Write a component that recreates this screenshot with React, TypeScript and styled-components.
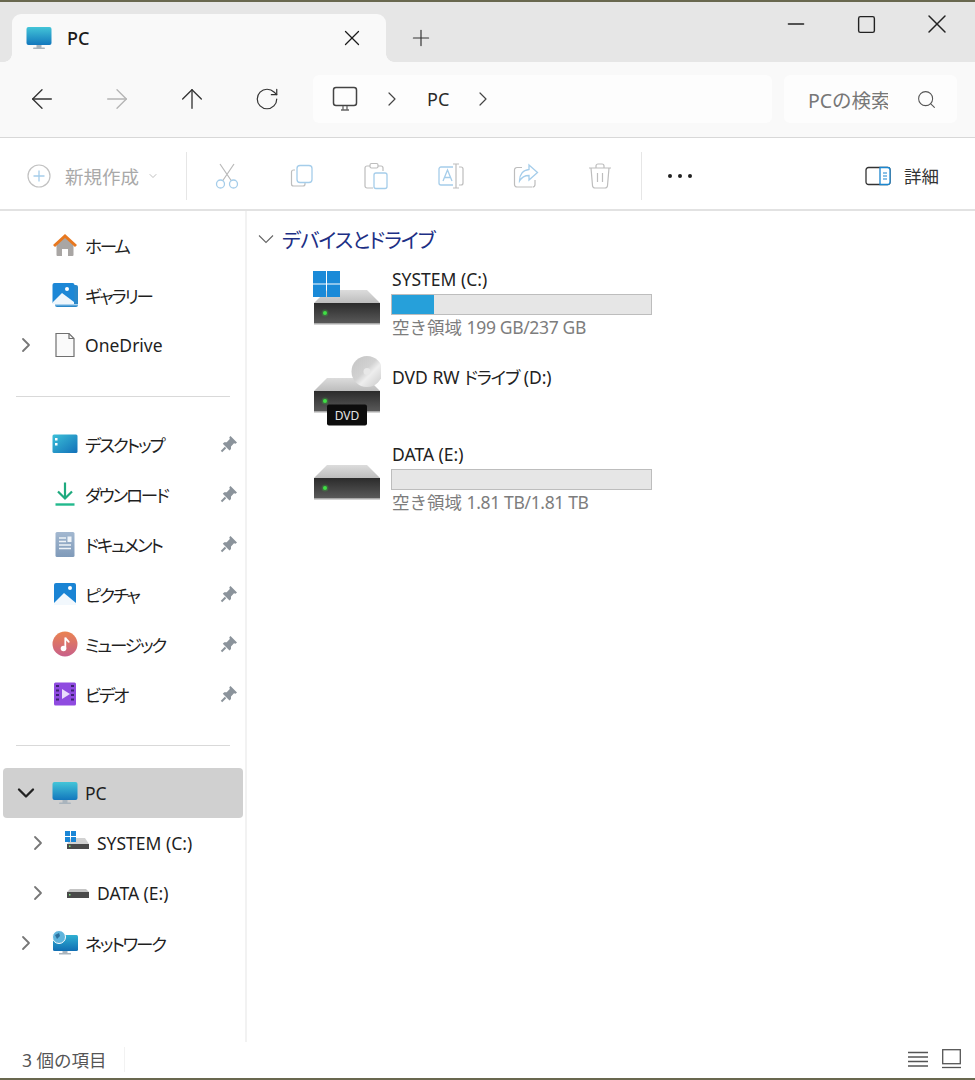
import React from "react";
import styled, { createGlobalStyle } from "styled-components";
import { ArrowLeft, ArrowRight, ArrowUp, ChevronDown, ChevronRight, Minus, Plus, RotateCw, Search, Square, X } from "lucide-react";

const GlobalStyle = createGlobalStyle`
  html, body { margin: 0; padding: 0; background: #fff; }
  * { box-sizing: border-box; }
  body {
    font-family: "Noto Sans", "Noto Sans CJK JP", sans-serif;
    color: #1b1b1b;
  }
`;

const Window = styled.div`
  width: 975px;
  height: 1080px;
  display: flex;
  flex-direction: column;
  overflow: hidden;
  border-top: 2px solid #69684f;
  border-bottom: 2px solid #69684f;
  background: #fff;
`;

const TitleBar = styled.div`
  height: 60px;
  flex: none;
  display: flex;
  background: #e6e6e6;
  padding-left: 12px;
`;

const Tab = styled.div`
  position: relative;
  width: 374px;
  height: 48px;
  margin-top: 12px;
  display: flex;
  align-items: center;
  padding: 0 21px 0 14px;
  background: #f9f9f9;
  border-radius: 9px 9px 0 0;
  font-size: 18px;
  font-weight: 500;
  &::before, &::after {
    content: "";
    position: absolute;
    bottom: 0;
    width: 8px;
    height: 8px;
  }
  &::before { left: -8px; background: radial-gradient(circle at 0 0, #e6e6e6 7.5px, #f9f9f9 8px); }
  &::after { right: -8px; background: radial-gradient(circle at 100% 0, #e6e6e6 7.5px, #f9f9f9 8px); }
`;

const TabTitle = styled.span`
  margin-left: 15px;
  flex: 1;
`;

const NewTab = styled.div`
  width: 70px;
  height: 48px;
  margin-top: 12px;
  display: flex;
  align-items: center;
  justify-content: center;
  color: #333;
`;

const WindowControls = styled.div`
  margin-left: auto;
  display: flex;
  padding-right: 2.5px;
`;

const WindowButton = styled.div`
  width: 70.5px;
  height: 44px;
  display: flex;
  align-items: center;
  justify-content: center;
  color: #222;
`;

const AddressRow = styled.div`
  height: 76px;
  flex: none;
  display: flex;
  align-items: center;
  padding: 0 18px 1px 4px;
  background: #f9f9f9;
  border-bottom: 1px solid #d8d8d8;
`;

const NavButton = styled.div<{ $muted?: boolean }>`
  width: 75px;
  height: 48px;
  display: flex;
  align-items: center;
  justify-content: center;
  color: ${(p) => (p.$muted ? "#b4b4b4" : "#333")};
`;

const Breadcrumb = styled.div`
  width: 459px;
  height: 48px;
  margin-left: 9px;
  display: flex;
  align-items: center;
  padding-left: 19px;
  background: #fdfdfd;
  border-radius: 6px;
  font-size: 18px;
  color: #2a2a2a;
`;

const CrumbChevron = styled.span`
  display: flex;
  width: 24px;
  justify-content: center;
  margin: 0 23px 0 22px;
  color: #444;
`;

const SearchBox = styled.div`
  width: 173px;
  height: 48px;
  margin-left: 12px;
  display: flex;
  align-items: center;
  padding-left: 24px;
  background: #fdfdfd;
  border-radius: 6px;
  color: #777;
  font-size: 19.5px;
`;

const SearchText = styled.span`
  width: 80px;
  flex: none;
  overflow: hidden;
  white-space: nowrap;
`;

const SearchIcon = styled.span`
  display: flex;
  margin-left: 28px;
  color: #555;
`;

const Toolbar = styled.div`
  height: 73px;
  flex: none;
  display: flex;
  align-items: center;
  padding-top: 4px;
  border-bottom: 2px solid #e2e2e2;
`;

const NewButton = styled.div`
  width: 186px;
  display: flex;
  align-items: center;
  padding-left: 27px;
  font-size: 18.5px;
  color: #a9a9a9;
`;

const NewLabel = styled.span`
  margin: 0 8px 0 14px;
`;

const Separator = styled.div`
  width: 1px;
  height: 48px;
  background: #e6e6e6;
`;

const ToolGroup = styled.div`
  display: flex;
  margin: 0 3px;
`;

const ToolButton = styled.div`
  width: 74.6px;
  display: flex;
  justify-content: center;
`;

const MoreButton = styled.div`
  width: 72px;
  margin-left: 2px;
  display: flex;
  justify-content: center;
`;

const Details = styled.div`
  margin-left: auto;
  padding-right: 36px;
  display: flex;
  align-items: center;
  gap: 13px;
  font-size: 17.5px;
  color: #333;
`;

const Body = styled.div`
  flex: 1;
  min-height: 0;
  display: flex;
`;

const Sidebar = styled.nav`
  width: 247px;
  flex: none;
  padding: 9px 3px 0;
  border-right: 2px solid #f2f2f2;
`;

const NavRow = styled.div<{ $active?: boolean; $indent?: boolean }>`
  width: 240px;
  height: 50px;
  display: flex;
  align-items: center;
  padding-left: ${(p) => (p.$indent ? "19px" : "7px")};
  padding-right: 4px;
  border-radius: 4px;
  background: ${(p) => (p.$active ? "#d0d0d0" : "transparent")};
  font-size: 17.5px;
  color: #1f1f1f;
`;

const Caret = styled.span<{ $strong?: boolean }>`
  width: 32px;
  flex: none;
  display: flex;
  justify-content: center;
  color: ${(p) => (p.$strong ? "#222" : "#777")};
`;

const RowIcon = styled.span`
  width: 32px;
  flex: none;
  margin-left: 7px;
  display: flex;
  justify-content: center;
`;

const RowLabel = styled.span`
  margin-left: 4px;
  white-space: nowrap;
`;

const Kana = styled.span<{ $tight?: number }>`
  font-feature-settings: "palt";
  letter-spacing: ${(p) => p.$tight ?? -2.1}px;
`;

const PinSlot = styled.span`
  width: 20px;
  margin-left: auto;
  display: flex;
  justify-content: center;
`;

const Divider = styled.hr`
  width: 214px;
  height: 1px;
  margin: 26px 0 22px 13px;
  border: 0;
  background: #d9d9d9;
`;

const Main = styled.main`
  flex: 1;
  padding: 16px 0 0 11px;
`;

const SectionHeader = styled.div`
  height: 24px;
  display: flex;
  align-items: center;
  gap: 8px;
  margin-bottom: 15px;
  font-size: 20.5px;
  color: #1d2f85;
  white-space: nowrap;
`;

const DriveList = styled.div`
  padding-left: 55px;
`;

const DriveTile = styled.div`
  height: 87.5px;
  display: flex;
`;

const DriveIcon = styled.span`
  width: 68px;
  flex: none;
  display: block;
`;

const DriveInfo = styled.div<{ $lone?: boolean }>`
  width: 261px;
  margin-left: 10px;
  padding-top: ${(p) => (p.$lone ? "10px" : "0")};
`;

const DriveName = styled.div`
  height: 26px;
  line-height: 26px;
  padding-left: 1px;
  font-size: 17.5px;
  color: #222;
  white-space: nowrap;
`;

const Meter = styled.div`
  height: 21px;
  margin-top: 2px;
  border: 1px solid #bdbdbd;
  background: #e6e6e6;
`;

const MeterFill = styled.div`
  height: 100%;
  background: #26a0da;
`;

const DriveFree = styled.div`
  height: 24px;
  line-height: 24px;
  padding-left: 1px;
  font-size: 17.5px;
  color: #7d7d7d;
  white-space: nowrap;
`;

const FreeAmount = styled.span`
  letter-spacing: -0.35px;
`;

const StatusBar = styled.footer`
  height: 36px;
  flex: none;
  display: flex;
  align-items: center;
  padding: 0 14px 2px 22px;
  font-size: 17.5px;
  color: #555;
`;

const StatusCount = styled.span`
  padding-right: 17px;
  border-right: 1px solid #f2f2f2;
`;

const StatusIcons = styled.div`
  margin-left: auto;
  display: flex;
  align-items: center;
  gap: 14px;
`;

const Glyph = styled.svg`
  display: block;
  flex: none;
`;

const MonitorIcon = ({ id, size = 26 }: { id: string; size?: number }) => (
  <Glyph width={size} height={size} viewBox="0 0 26 26">
    <defs>
      <linearGradient id={id} x1="0" y1="0" x2="0" y2="1">
        <stop offset="0" stopColor="#43c5d8" />
        <stop offset="1" stopColor="#1277bd" />
      </linearGradient>
    </defs>
    <rect x="10.5" y="19" width="5" height="4" fill="#a9b4bd" />
    <rect x="7" y="22.5" width="12" height="1.6" rx=".8" fill="#a9b4bd" />
    <rect x="0.5" y="2" width="25" height="18" rx="2" fill={`url(#${id})`} />
  </Glyph>
);

const HomeIcon = () => (
  <Glyph width={26} height={26} viewBox="0 0 26 26">
    <path d="M4.5 12 13 4.5 21.5 12V23a1 1 0 0 1-1 1H16v-7h-6v7H5.500a1 1 0 0 1-1-1Z" fill="#a9a6a4" />
    <path d="M1 13 13 2 25 13 23 15 13 6 3 15Z" fill="#e8781f" />
  </Glyph>
);

const GalleryIcon = () => (
  <Glyph width={26} height={26} viewBox="0 0 26 26">
    <rect x="3" y="3" width="23" height="22" rx="2" fill="#2a88c9" />
    <rect x="0.500" y="1" width="22" height="21" rx="2" fill="#1c87d6" />
    <path d="M1 20 10 11 22 20V22H1Z" fill="#eef6fc" />
    <circle cx="15" cy="7" r="2" fill="#fff" />
    <rect x="3" y="22" width="23" height="1.400" fill="#a9d2ef" />
  </Glyph>
);

const FileIcon = () => (
  <Glyph width={26} height={26} viewBox="0 0 26 26">
    <path d="M4 1.500H17L22 6.500V24.500H4Z" fill="#fafafa" stroke="#707070" strokeWidth="1.200" />
    <path d="M17 1.500V6.500H22" fill="none" stroke="#707070" strokeWidth="1.200" />
  </Glyph>
);

const DesktopIcon = () => (
  <Glyph width={26} height={26} viewBox="0 0 26 26">
    <defs>
      <linearGradient id="desk" x1="0" y1="0" x2="1" y2="1">
        <stop offset="0" stopColor="#3cc0d8" />
        <stop offset="1" stopColor="#1270b8" />
      </linearGradient>
    </defs>
    <rect x="0.500" y="3.500" width="25" height="18.500" rx="1.500" fill="url(#desk)" />
    <rect x="3" y="7" width="2.500" height="2.500" fill="#fff" />
    <rect x="3" y="12" width="2.500" height="2.500" fill="#fff" />
  </Glyph>
);

const DownloadIcon = () => (
  <Glyph width={26} height={26} viewBox="0 0 26 26">
    <path d="M13 1.500V17M6 10.500 13 17.500 20 10.500" fill="none" stroke="#1eaa7e" strokeWidth="2.200" />
    <path d="M3.500 23.500H22.500" stroke="#22b98d" strokeWidth="2.400" />
  </Glyph>
);

const DocumentIcon = () => (
  <Glyph width={26} height={26} viewBox="0 0 26 26">
    <defs>
      <linearGradient id="doc" x1="0" y1="0" x2="0" y2="1">
        <stop offset="0" stopColor="#a3b8d0" />
        <stop offset="1" stopColor="#7f9ab9" />
      </linearGradient>
    </defs>
    <rect x="3.500" y="1" width="19" height="25" rx="1.500" fill="url(#doc)" />
    <path d="M7 7H14M7 10.500H14M7 14H19M7 17.500H19" stroke="#eef3f8" strokeWidth="1.300" />
    <rect x="15.500" y="5.500" width="4" height="5.500" fill="#eef3f8" />
  </Glyph>
);

const PicturesIcon = () => (
  <Glyph width={26} height={26} viewBox="0 0 26 26">
    <rect x="2" y="2" width="22" height="22" rx="2" fill="#1a84d4" />
    <path d="M2 22 12 12 24 22V24H2Z" fill="#f2f8fd" />
    <circle cx="18" cy="7" r="2" fill="#fff" />
  </Glyph>
);

const MusicIcon = () => (
  <Glyph width={26} height={26} viewBox="0 0 26 26">
    <defs>
      <linearGradient id="music" x1="0" y1="0" x2="0" y2="1">
        <stop offset="0" stopColor="#ea8350" />
        <stop offset="1" stopColor="#c8608a" />
      </linearGradient>
    </defs>
    <circle cx="13" cy="13" r="12.500" fill="url(#music)" />
    <circle cx="11.500" cy="17.500" r="2.800" fill="#fff" />
    <path d="M13.300 17.500V6.500C14 9 16.500 9.500 17 11.500" fill="none" stroke="#fff" strokeWidth="1.800" />
  </Glyph>
);

const VideoIcon = () => (
  <Glyph width={26} height={26} viewBox="0 0 26 26">
    <rect x="2" y="1.500" width="22" height="23" rx="1.500" fill="#8f4be0" />
    <path d="M10 8 18 13 10 18Z" fill="#e9dcfb" />
    <path d="M4 5H7M4 9.500H7M4 14H7M4 18.500H7M19 5H22M19 9.500H22M19 14H22M19 18.500H22" stroke="#3e2275" strokeWidth="1.800" />
  </Glyph>
);

const SmallDrive = ({ withLogo }: { withLogo?: boolean }) => (
  <Glyph width={28} height={26} viewBox="0 0 28 26">
    {withLogo ? (
      <>
        <path d="M8 8H22L26 14H4Z" fill="#d2d2d2" />
        <rect x="4" y="14" width="22" height="5" fill="#4a4a4a" />
        <rect x="6" y="15.500" width="1.500" height="1.500" fill="#7fe27f" />
        <g fill="#1a86d6">
          <rect x="2" y="1" width="5" height="5" />
          <rect x="8" y="1" width="5" height="5" />
          <rect x="2" y="7" width="5" height="5" />
          <rect x="8" y="7" width="5" height="5" />
        </g>
      </>
    ) : (
      <>
        <path d="M7 9H23L26 12H4Z" fill="#c4c4c4" />
        <rect x="4" y="12" width="22" height="6" fill="#4a4a4a" />
        <rect x="6" y="14" width="1.500" height="1.500" fill="#7fe27f" />
      </>
    )}
  </Glyph>
);

const NetworkIcon = () => (
  <Glyph width={26} height={26} viewBox="0 0 26 26">
    <defs>
      <linearGradient id="netscreen" x1="0" y1="0" x2="0" y2="1">
        <stop offset="0" stopColor="#2fb0d2" />
        <stop offset="1" stopColor="#116eb3" />
      </linearGradient>
    </defs>
    <rect x="10.500" y="20" width="5" height="3.500" fill="#a9b4bd" />
    <rect x="7" y="23" width="12" height="1.500" fill="#a9b4bd" />
    <rect x="1" y="5" width="25" height="16" rx="1.500" fill="url(#netscreen)" />
    <circle cx="7" cy="7" r="6.500" fill="#5fb4dc" stroke="#fff" strokeWidth="1" />
    <path d="M3 5 7 3 8 6 5 9Z" fill="#2b6f9d" />
  </Glyph>
);

const PinIcon = () => (
  <Glyph width={18} height={18} viewBox="0 0 18 18">
    <path d="M10.500 1 17 7.500 15.500 8.800 14 8.300 11 11.500 11 14 9.500 15.500 2.800 8.800 4.300 7.200 6.700 7.200 9.800 4 9.300 2.300Z" fill="#8b939b" />
    <path d="M5.500 12.500 1.500 16.500" stroke="#8b939b" strokeWidth="2" />
  </Glyph>
);

const DriveBase = () => (
  <>
    <path d="M14 24H54L67 37H1Z" fill="url(#driveTop)" />
    <rect x="1" y="37" width="66" height="21" fill="url(#driveFront)" />
    <rect x="1" y="57" width="66" height="1.500" fill="#a8a8a8" />
    <circle cx="12" cy="47" r="3.500" fill="#37d13c" opacity=".25" />
    <circle cx="12" cy="47" r="2" fill="#3fe044" />
  </>
);

const DriveGraphic = ({ kind }: { kind: string }) => (
  <Glyph width={68} height={87} viewBox="0 0 68 87">
    <defs>
      <linearGradient id="driveTop" x1="0" y1="0" x2="0" y2="1">
        <stop offset="0" stopColor="#dcdcdc" />
        <stop offset="1" stopColor="#bdbdbd" />
      </linearGradient>
      <linearGradient id="driveFront" x1="0" y1="0" x2="0" y2="1">
        <stop offset="0" stopColor="#2b2b2b" />
        <stop offset="1" stopColor="#5b5b5b" />
      </linearGradient>
      <linearGradient id="discFace" x1="0" y1="0" x2="1" y2="1">
        <stop offset="0" stopColor="#c4c4c4" />
        <stop offset=".45" stopColor="#d2d2d2" />
        <stop offset=".6" stopColor="#eeeeee" />
        <stop offset="1" stopColor="#c8c8c8" />
      </linearGradient>
    </defs>
    <DriveBase />
    {kind === "system" && (
      <g fill="#1a8ad8">
        <rect x="0" y="5" width="13" height="12.500" />
        <rect x="14" y="5" width="13" height="12.500" />
        <rect x="0" y="18.500" width="13" height="12.500" />
        <rect x="14" y="18.500" width="13" height="12.500" />
      </g>
    )}
    {kind === "dvd" && (
      <>
        <circle cx="54" cy="17.500" r="15.500" fill="url(#discFace)" />
        <circle cx="54" cy="17.500" r="3.500" fill="#e8e8e8" />
        <rect x="14" y="50.500" width="40" height="21" rx="2" fill="#0d0d0d" />
        <text x="34" y="65.500" textAnchor="middle" fontSize="12" fill="#e4e4e4" fontFamily="Noto Sans, sans-serif">DVD</text>
      </>
    )}
  </Glyph>
);

const Scissors = () => (
  <Glyph width={28} height={28} viewBox="0 0 28 28">
    <path d="M7 2 18.500 19M21 2 9.500 19" fill="none" stroke="#b9b9b9" strokeWidth="1.200" />
    <circle cx="7.500" cy="22" r="4" fill="none" stroke="#a5cdea" strokeWidth="1.300" />
    <circle cx="20.500" cy="22" r="4" fill="none" stroke="#a5cdea" strokeWidth="1.300" />
  </Glyph>
);

const CopyGlyph = () => (
  <Glyph width={28} height={28} viewBox="0 0 28 28">
    <path d="M7 8H5.500A2 2 0 0 0 3.500 10V22A2 2 0 0 0 5.500 24H15A2 2 0 0 0 17 22V21" fill="none" stroke="#bdbdbd" strokeWidth="1.200" />
    <rect x="9" y="3.500" width="15" height="17" rx="3" fill="none" stroke="#a5cdea" strokeWidth="1.300" />
  </Glyph>
);

const PasteGlyph = () => (
  <Glyph width={28} height={28} viewBox="0 0 28 28">
    <path d="M11 26H5A2 2 0 0 1 3 24V6A2 2 0 0 1 5 4H19A2 2 0 0 1 21 6V9" fill="none" stroke="#bdbdbd" strokeWidth="1.200" />
    <rect x="8" y="1.500" width="8" height="4.500" rx="1.500" fill="#fff" stroke="#bdbdbd" strokeWidth="1.200" />
    <rect x="12" y="11" width="13" height="15.500" rx="2" fill="#fff" stroke="#a5cdea" strokeWidth="1.300" />
  </Glyph>
);

const RenameGlyph = () => (
  <Glyph width={28} height={28} viewBox="0 0 28 28">
    <path d="M16 5H4A2 2 0 0 0 2 7V21A2 2 0 0 0 4 23H16" fill="none" stroke="#a5cdea" strokeWidth="1.300" />
    <path d="M22 5H24A2 2 0 0 1 26 7V21A2 2 0 0 1 24 23H22" fill="none" stroke="#bdbdbd" strokeWidth="1.200" />
    <path d="M19 2V26M16 2H22M16 26H22" fill="none" stroke="#bdbdbd" strokeWidth="1.200" />
    <path d="M6 19 10.500 8 15 19M7.500 15.500H13.500" fill="none" stroke="#a5cdea" strokeWidth="1.300" />
  </Glyph>
);

const ShareGlyph = () => (
  <Glyph width={28} height={28} viewBox="0 0 28 28">
    <path d="M20 25H5A2.500 2.500 0 0 1 2.500 22.500V8A2.500 2.500 0 0 1 5 5.500H10M23 18V22.500A2.500 2.500 0 0 1 20.500 25" fill="none" stroke="#bdbdbd" strokeWidth="1.200" />
    <path d="M17 3 25.500 10.500 17 18V13.500C12 13.500 9.500 15.500 7.500 19C7.500 12.500 11 8 17 7.500Z" fill="none" stroke="#a5cdea" strokeWidth="1.300" />
  </Glyph>
);

const TrashGlyph = () => (
  <Glyph width={28} height={28} viewBox="0 0 28 28">
    <path d="M3 6H25M10 6V4A2 2 0 0 1 12 2H16A2 2 0 0 1 18 4V6M5 6 6.500 23.500A2.500 2.500 0 0 0 9 26H19A2.500 2.500 0 0 0 21.500 23.500L23 6M11.500 11V20M16.500 11V20" fill="none" stroke="#bdbdbd" strokeWidth="1.200" />
  </Glyph>
);

const PlusCircle = () => (
  <Glyph width={24} height={24} viewBox="0 0 24 24">
    <circle cx="12" cy="12" r="11" fill="none" stroke="#c2c2c2" strokeWidth="1.200" />
    <path d="M12 6.500V17.500M6.500 12H17.500" stroke="#a5cdea" strokeWidth="1.300" />
  </Glyph>
);

const PaneGlyph = () => (
  <Glyph width={26} height={20} viewBox="0 0 26 20">
    <rect x="1" y="1.500" width="24" height="17" rx="2.500" fill="none" stroke="#333" strokeWidth="1.300" />
    <path d="M15 1.500H22.500A2.500 2.500 0 0 1 25 4V16A2.500 2.500 0 0 1 22.500 18.500H15Z" fill="#fff" stroke="#1b86cf" strokeWidth="1.300" />
    <path d="M18 7H22M18 10H22M18 13H22" stroke="#1b86cf" strokeWidth="1.100" />
  </Glyph>
);

const MonitorOutline = () => (
  <Glyph width={26} height={26} viewBox="0 0 26 26">
    <rect x="1.500" y="1.500" width="23" height="18" rx="2.500" fill="none" stroke="#444" strokeWidth="1.500" />
    <path d="M9 24H17M11 20V24M15 20V24" stroke="#666" strokeWidth="1.300" />
  </Glyph>
);

const SectionCaret = () => (
  <Glyph width={16} height={10} viewBox="0 0 16 10">
    <path d="M1 1.500 8 8.500 15 1.500" fill="none" stroke="#666" strokeWidth="1.100" />
  </Glyph>
);

const ListView = () => (
  <Glyph width={20} height={18} viewBox="0 0 20 18">
    <path d="M0 2.500H20M0 7H20M0 11.500H20M0 16H20" stroke="#555" strokeWidth="1.300" />
  </Glyph>
);

const TileView = () => (
  <Glyph width={19} height={20} viewBox="0 0 19 20">
    <rect x=".7" y=".7" width="17.600" height="14" fill="none" stroke="#555" strokeWidth="1.300" />
    <path d="M0 18.500H19" stroke="#555" strokeWidth="1.300" />
  </Glyph>
);

const drives = [
  { kind: "system", name: "SYSTEM (C:)", usedGb: 38, totalGb: 237, free: "199 GB/237 GB" },
  { kind: "dvd", name: "DVD RW", suffix: " (D:)" },
  { kind: "data", name: "DATA (E:)", usedGb: 0, totalGb: 1853, free: "1.81 TB/1.81 TB" },
];

const quickLinks = [
  { label: "デスクトップ", icon: <DesktopIcon /> },
  { label: "ダウンロード", icon: <DownloadIcon /> },
  { label: "ドキュメント", icon: <DocumentIcon /> },
  { label: "ピクチャ", icon: <PicturesIcon /> },
  { label: "ミュージック", icon: <MusicIcon /> },
  { label: "ビデオ", icon: <VideoIcon /> },
];

const tools = [<Scissors />, <CopyGlyph />, <PasteGlyph />, <RenameGlyph />, <ShareGlyph />, <TrashGlyph />];

export default function App() {
  return (
    <>
      <GlobalStyle />
      <Window>
        <TitleBar>
          <Tab>
            <MonitorIcon id="tabScreen" />
            <TabTitle>PC</TabTitle>
            <X size={26} strokeWidth={1.2} />
          </Tab>
          <NewTab>
            <Plus size={26} strokeWidth={1.1} />
          </NewTab>
          <WindowControls>
            <WindowButton><Minus size={26} strokeWidth={1.4} /></WindowButton>
            <WindowButton><Square size={21} strokeWidth={1.6} /></WindowButton>
            <WindowButton><X size={32} strokeWidth={1.1} /></WindowButton>
          </WindowControls>
        </TitleBar>

        <AddressRow>
          <NavButton><ArrowLeft size={32} strokeWidth={1} /></NavButton>
          <NavButton $muted><ArrowRight size={32} strokeWidth={1} /></NavButton>
          <NavButton><ArrowUp size={32} strokeWidth={1} /></NavButton>
          <NavButton><RotateCw size={26} strokeWidth={1.1} /></NavButton>
          <Breadcrumb>
            <MonitorOutline />
            <CrumbChevron><ChevronRight size={24} strokeWidth={1.2} /></CrumbChevron>
            PC
            <CrumbChevron><ChevronRight size={24} strokeWidth={1.2} /></CrumbChevron>
          </Breadcrumb>
          <SearchBox>
            <SearchText>PCの検索</SearchText>
            <SearchIcon><Search size={21} strokeWidth={1.2} /></SearchIcon>
          </SearchBox>
        </AddressRow>

        <Toolbar>
          <NewButton>
            <PlusCircle />
            <NewLabel>新規作成</NewLabel>
            <ChevronDown size={12} strokeWidth={1.5} />
          </NewButton>
          <Separator />
          <ToolGroup>
            {tools.map((tool, i) => (
              <ToolButton key={i}>{tool}</ToolButton>
            ))}
          </ToolGroup>
          <Separator />
          <MoreButton>
            <Glyph width={26} height={6} viewBox="0 0 26 6">
              <circle cx="3" cy="3" r="2" fill="#222" />
              <circle cx="13" cy="3" r="2" fill="#222" />
              <circle cx="23" cy="3" r="2" fill="#222" />
            </Glyph>
          </MoreButton>
          <Details>
            <PaneGlyph />
            詳細
          </Details>
        </Toolbar>

        <Body>
          <Sidebar>
            <NavRow>
              <Caret />
              <RowIcon><HomeIcon /></RowIcon>
              <RowLabel><Kana>ホーム</Kana></RowLabel>
            </NavRow>
            <NavRow>
              <Caret />
              <RowIcon><GalleryIcon /></RowIcon>
              <RowLabel><Kana>ギャラリー</Kana></RowLabel>
            </NavRow>
            <NavRow>
              <Caret><ChevronRight size={24} strokeWidth={1.8} /></Caret>
              <RowIcon><FileIcon /></RowIcon>
              <RowLabel>OneDrive</RowLabel>
            </NavRow>
            <Divider />
            {quickLinks.map((link) => (
              <NavRow key={link.label}>
                <Caret />
                <RowIcon>{link.icon}</RowIcon>
                <RowLabel><Kana>{link.label}</Kana></RowLabel>
                <PinSlot><PinIcon /></PinSlot>
              </NavRow>
            ))}
            <Divider />
            <NavRow $active>
              <Caret $strong><ChevronDown size={28} strokeWidth={2} /></Caret>
              <RowIcon><MonitorIcon id="navScreen" /></RowIcon>
              <RowLabel>PC</RowLabel>
            </NavRow>
            <NavRow $indent>
              <Caret><ChevronRight size={24} strokeWidth={1.8} /></Caret>
              <RowIcon><SmallDrive withLogo /></RowIcon>
              <RowLabel>SYSTEM (C:)</RowLabel>
            </NavRow>
            <NavRow $indent>
              <Caret><ChevronRight size={24} strokeWidth={1.8} /></Caret>
              <RowIcon><SmallDrive /></RowIcon>
              <RowLabel>DATA (E:)</RowLabel>
            </NavRow>
            <NavRow>
              <Caret><ChevronRight size={24} strokeWidth={1.8} /></Caret>
              <RowIcon><NetworkIcon /></RowIcon>
              <RowLabel><Kana>ネットワーク</Kana></RowLabel>
            </NavRow>
          </Sidebar>

          <Main>
            <SectionHeader>
              <SectionCaret />
              <Kana $tight={-1.1}>デバイスとドライブ</Kana>
            </SectionHeader>
            <DriveList>
              {drives.map((drive) => (
                <DriveTile key={drive.kind}>
                  <DriveIcon><DriveGraphic kind={drive.kind} /></DriveIcon>
                  <DriveInfo $lone={!drive.free}>
                    <DriveName>
                      {drive.name}
                      {drive.suffix && (
                        <>
                          {" "}<Kana $tight={-1.2}>ドライブ</Kana>{drive.suffix}
                        </>
                      )}
                    </DriveName>
                    {drive.free && (
                      <>
                        <Meter>
                          <MeterFill style={{ width: `${(drive.usedGb! / drive.totalGb!) * 100}%` }} />
                        </Meter>
                        <DriveFree>空き領域 <FreeAmount>{drive.free}</FreeAmount></DriveFree>
                      </>
                    )}
                  </DriveInfo>
                </DriveTile>
              ))}
            </DriveList>
          </Main>
        </Body>

        <StatusBar>
          <StatusCount>3 個の項目</StatusCount>
          <StatusIcons>
            <ListView />
            <TileView />
          </StatusIcons>
        </StatusBar>
      </Window>
    </>
  );
}
